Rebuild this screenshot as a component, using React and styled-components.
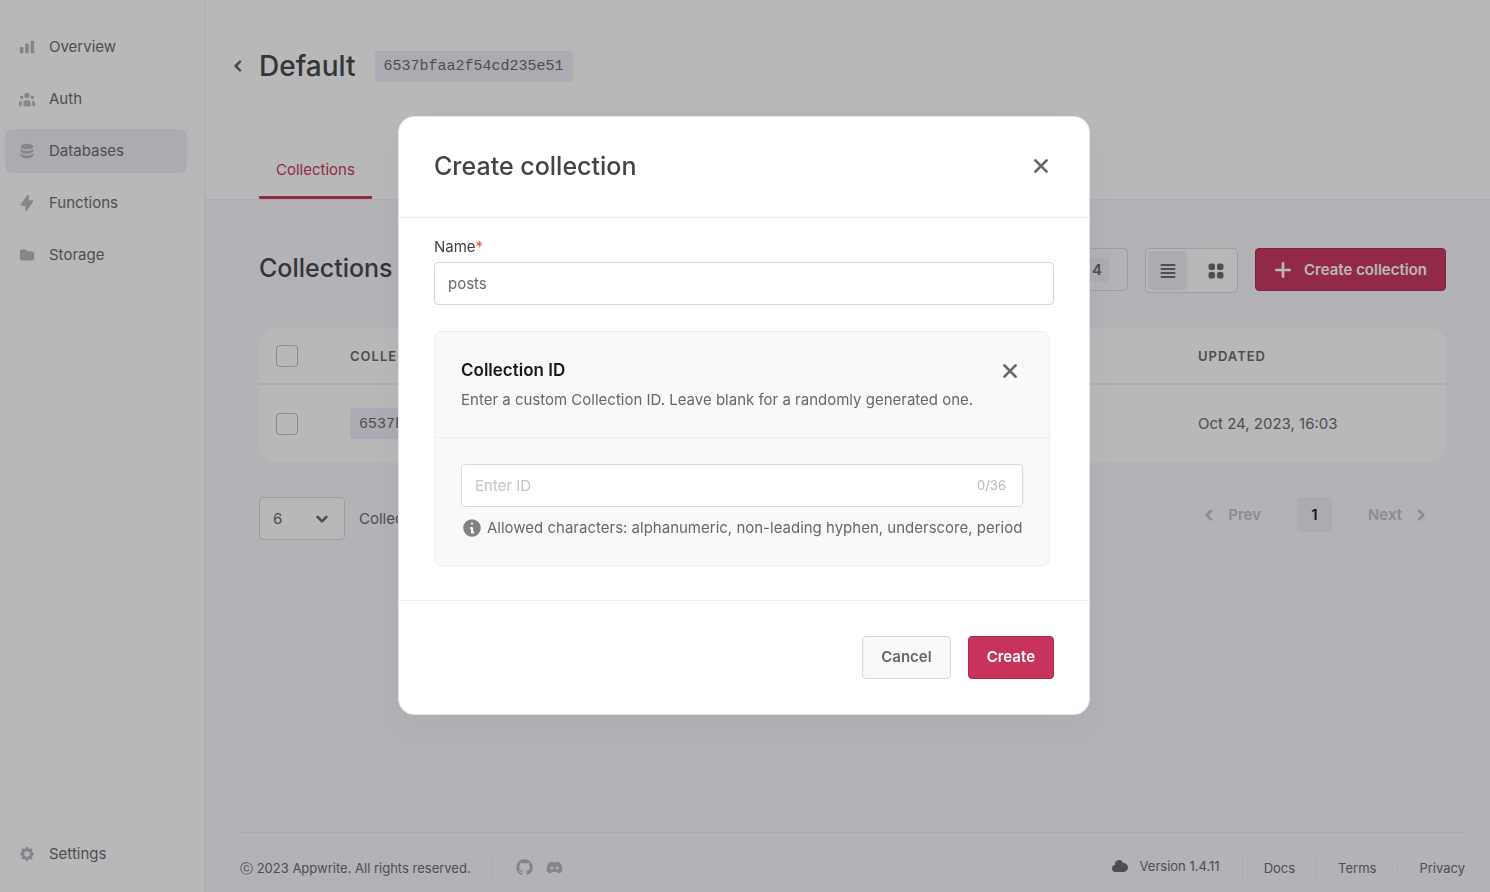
import React from "react";
import styled, { createGlobalStyle, css } from "styled-components";
import {
  HiChartBar,
  HiUserGroup,
  HiDatabase,
  HiLightningBolt,
  HiFolder,
  HiCog,
  HiCloud,
  HiInformationCircle,
} from "react-icons/hi";
import { FaGithub, FaDiscord } from "react-icons/fa";

const colors = {
  white: "#ffffff",
  canvas: "#f7f6fc",
  tint: "#eeedf5",
  line: "#edecf2",
  lineStrong: "#d8d8dc",
  text: "#68686c",
  heading: "#434348",
  icon: "#b7b6be",
  pink: "#c8335c",
  pinkDark: "#ad2950",
};

const GlobalStyle = createGlobalStyle`
  *, *::before, *::after { box-sizing: border-box; }
  body {
    margin: 0;
    font-family: Inter, "Liberation Sans", sans-serif;
    font-size: 15px;
    line-height: 24px;
    color: ${colors.text};
    background: ${colors.canvas};
  }
  button, input, select { font: inherit; color: inherit; }
  h1, h2, h3, p, ul { margin: 0; padding: 0; }
  a { color: inherit; text-decoration: none; }
`;

const Shell = styled.div`
  display: flex;
  min-height: 100vh;
`;

const Sidebar = styled.nav`
  display: flex;
  flex-direction: column;
  justify-content: space-between;
  flex: none;
  width: 205px;
  padding: 25px 17px 16px 5px;
  background: ${colors.white};
  border-right: 1px solid ${colors.line};
`;

const NavList = styled.ul`
  display: flex;
  flex-direction: column;
  gap: 8px;
  list-style: none;
`;

const NavLink = styled.a`
  display: flex;
  align-items: center;
  gap: 13px;
  height: 44px;
  padding: 0 13px;
  border-radius: 8px;
  background: ${(p) => (p.$active ? colors.tint : "transparent")};

  svg {
    width: 18px;
    height: 18px;
    color: ${colors.icon};
  }
`;

const Main = styled.div`
  display: flex;
  flex-direction: column;
  flex: 1;
  min-width: 0;
`;

const PageHeader = styled.header`
  display: flex;
  flex-direction: column;
  justify-content: space-between;
  height: 200px;
  padding: 48px 44px 0 26px;
  background: ${colors.white};
  border-bottom: 1px solid ${colors.line};
`;

const TitleRow = styled.div`
  display: flex;
  align-items: center;
`;

const IconButton = styled.button`
  display: grid;
  place-items: center;
  width: ${(p) => p.$size}px;
  height: ${(p) => p.$size}px;
  padding: 0;
  border: 0;
  background: none;
  color: #66666b;
`;

const PageTitle = styled.h1`
  margin: 0 19px 0 14px;
  font-size: 28px;
  font-weight: 500;
  line-height: 36px;
  color: ${colors.heading};
`;

const IdChip = styled.span`
  display: inline-flex;
  align-items: center;
  height: 31px;
  padding: 2px 9px 0;
  border-radius: 4px;
  background: ${colors.tint};
  font-family: "Liberation Mono", monospace;
  font-size: 15px;
`;

const Tabs = styled.div`
  display: flex;
  padding-left: 28px;
`;

const Tab = styled.a`
  height: 41px;
  padding: 0 17px;
  border-bottom: 3px solid ${colors.pink};
  border-radius: 1px;
  color: ${colors.pink};
`;

const Content = styled.main`
  flex: 1;
  padding: 48px 44px 48px 54px;
`;

const Toolbar = styled.div`
  display: flex;
  justify-content: space-between;
  align-items: flex-start;
`;

const SectionTitle = styled.h2`
  font-size: 25px;
  font-weight: 500;
  line-height: 40px;
  color: ${colors.heading};
`;

const ToolbarActions = styled.div`
  display: flex;
  align-items: flex-start;
  gap: 17px;
`;

const Button = styled.button`
  display: inline-flex;
  align-items: center;
  gap: 12px;
  height: 43px;
  padding: 0 18px;
  border: 1px solid ${colors.lineStrong};
  border-radius: 4px;
  background: #f9f9fa;
  font-weight: 600;

  ${(p) =>
    p.$primary &&
    css`
      border-color: ${colors.pinkDark};
      background: ${colors.pink};
      color: ${colors.white};
    `}
  ${(p) =>
    p.$outline &&
    css`
      background: transparent;
    `}
`;

const Count = styled.span`
  padding: 0 7px;
  border-radius: 4px;
  background: ${colors.tint};
`;

const ViewSwitch = styled.div`
  display: flex;
  gap: 9px;
  width: 93px;
  height: 45px;
  padding: 2px;
  border: 1px solid ${colors.lineStrong};
  border-radius: 5px;
  background: ${colors.white};
`;

const ViewButton = styled.button`
  display: grid;
  place-items: center;
  width: 39px;
  padding: 0;
  border: 0;
  border-radius: 4px;
  background: ${(p) => (p.$active ? colors.tint : "transparent")};
`;

const Table = styled.table`
  width: 100%;
  margin-top: 35px;
  border-collapse: separate;
  border-spacing: 0;
  table-layout: fixed;
  border-radius: 16px;
  background: ${colors.white};

  th,
  td {
    padding: 0;
    text-align: left;
  }
  th {
    height: 57px;
    border-bottom: 2px solid ${colors.line};
    font-size: 13px;
    font-weight: 600;
    letter-spacing: 1px;
    text-transform: uppercase;
  }
  td {
    height: 77px;
  }
`;

const CheckCell = styled.col`
  width: 91px;
`;

const UpdatedCell = styled.col`
  width: 248px;
`;

const Checkbox = styled.input`
  display: block;
  appearance: none;
  width: 22px;
  height: 22px;
  margin: 0 0 0 17px;
  border: 1px solid #bcbcc1;
  border-radius: 4px;
`;

const Pager = styled.div`
  display: flex;
  justify-content: space-between;
  align-items: flex-start;
  margin-top: 35px;
`;

const PageSize = styled.label`
  display: flex;
  align-items: center;
  gap: 14px;
`;

const SelectBox = styled.span`
  display: grid;
  align-items: center;
  width: 86px;

  select,
  svg {
    grid-area: 1 / 1;
  }
  svg {
    justify-self: end;
    margin-right: 17px;
    pointer-events: none;
  }
`;

const Select = styled.select`
  appearance: none;
  width: 100%;
  height: 43px;
  padding: 0 13px;
  border: 1px solid ${colors.lineStrong};
  border-radius: 4px;
  background: ${colors.white};
`;

const PageNav = styled.nav`
  display: flex;
  align-items: center;
  padding-right: 19px;
  gap: 36px;
`;

const StepButton = styled.button`
  display: flex;
  align-items: center;
  gap: 13px;
  padding: 0;
  border: 0;
  background: none;
  font-weight: 600;
  color: #c0bfc6;
`;

const CurrentPage = styled.button`
  width: 35px;
  height: 35px;
  padding: 0;
  border: 0;
  border-radius: 4px;
  background: ${colors.tint};
  font-weight: 600;
  color: #1b1b1f;
`;

const Footer = styled.footer`
  display: flex;
  justify-content: space-between;
  align-items: center;
  height: 60px;
  margin: 0 25px 0 35px;
  padding-top: 10px;
  border-top: 1px solid ${colors.line};
  font-size: 13px;
`;

const FooterGroup = styled.div`
  display: flex;
  align-items: center;
`;

const Divider = styled.span`
  width: 1px;
  height: ${(p) => (p.$tall ? 32 : 20)}px;
  margin: 0 21px;
  background: ${colors.line};
`;

const SocialLinks = styled.div`
  display: flex;
  gap: 13px;
  padding-left: 2px;

  a {
    display: flex;
    color: ${colors.icon};
  }
`;

const Version = styled.a`
  display: flex;
  align-items: center;
  gap: 10px;
  height: 28px;
  padding: 0 1px 3px 0;
`;

const Backdrop = styled.div`
  position: fixed;
  inset: 0;
  display: flex;
  justify-content: center;
  align-items: center;
  padding: 0 2px 62px 0;
  background: rgba(20, 20, 22, 0.3);
`;

const Modal = styled.form`
  width: 692px;
  max-width: 100%;
  border: 1px solid #e4e4e6;
  border-radius: 16px;
  background: ${colors.white};
  box-shadow: 0 16px 32px rgba(55, 59, 77, 0.04);
`;

const ModalHeader = styled.header`
  display: flex;
  justify-content: space-between;
  align-items: center;
  height: 101px;
  padding: 0 35px 2px;
  border-bottom: 1px solid #ededf0;
`;

const ModalTitle = styled.h2`
  font-size: 25px;
  font-weight: 500;
  line-height: 32px;
  color: ${colors.heading};
`;

const ModalBody = styled.div`
  padding: 17px 35px 34px;
`;

const Label = styled.label`
  display: block;
  margin-bottom: 3px;
  color: #414146;
`;

const Required = styled.span`
  color: #f0483e;
`;

const Field = styled.input`
  display: block;
  flex: 1;
  width: 100%;
  min-width: 0;
  height: 43px;
  padding: 0 13px;
  border: 1px solid #d8d8db;
  border-radius: 4px;
  outline: 0;
  background: ${colors.white};

  &::placeholder {
    color: #c4c4c7;
    opacity: 1;
  }
`;

const Panel = styled.section`
  margin: 26px 4px 0 0;
  border: 1px solid #ededf0;
  border-radius: 8px;
  background: #f9f9fa;
`;

const PanelHeader = styled.div`
  height: 106px;
  padding: 26px 26px 0;
  border-bottom: 1px solid #ededf0;
`;

const PanelTitleRow = styled.div`
  display: flex;
  justify-content: space-between;
  align-items: center;
  margin-bottom: 4px;
`;

const PanelTitle = styled.h3`
  font-size: 17px;
  font-weight: 600;
  line-height: 25px;
  color: #18181b;
`;

const PanelBody = styled.div`
  padding: 26px 26px 25px;
`;

const CountedField = styled.div`
  display: flex;
  align-items: center;
  border: 1px solid #d8d8db;
  border-radius: 4px;
  background: ${colors.white};

  ${Field} {
    height: 41px;
    border: 0;
  }
`;

const Counter = styled.span`
  padding-right: 16px;
  font-size: 13px;
  color: #b9b9bd;
`;

const Hint = styled.p`
  display: flex;
  align-items: center;
  gap: 4px;
  margin-top: 9px;
  white-space: nowrap;

  svg {
    flex: none;
    color: #818186;
  }
`;

const ModalFooter = styled.footer`
  display: flex;
  justify-content: flex-end;
  gap: 17px;
  padding: 35px;
  border-top: 1px solid #ededf0;
`;

const CloseIcon = () => (
  <svg width="16" height="16" viewBox="0 0 16 16" fill="none" stroke="currentColor" strokeWidth="2.7" strokeLinecap="round" aria-hidden="true">
    <path d="M2.4 2.4l11.2 11.2M13.6 2.4L2.4 13.6" />
  </svg>
);

const rotation = { left: 0, right: 180, down: 270 };

const Chevron = ({ to }) => (
  <svg width="12" height="12" viewBox="0 0 12 12" fill="none" stroke="currentColor" strokeWidth="2.6" strokeLinecap="round" strokeLinejoin="round" aria-hidden="true">
    <path d="M8 1.7L3.7 6 8 10.3" transform={`rotate(${rotation[to]} 6 6)`} />
  </svg>
);

const PlusIcon = () => (
  <svg width="18" height="18" viewBox="0 0 18 18" fill="none" stroke="currentColor" strokeWidth="2.7" strokeLinecap="round" aria-hidden="true">
    <path d="M9 2.4v13.2M2.4 9h13.2" />
  </svg>
);

const ListIcon = () => (
  <svg width="16" height="16" viewBox="0 0 16 16" fill="none" stroke="currentColor" strokeWidth="2" strokeLinecap="round" aria-hidden="true">
    <path d="M1.5 2h13M1.5 6h13M1.5 10h13M1.5 14h13" />
  </svg>
);

const GridIcon = () => (
  <svg width="16" height="16" viewBox="0 0 16 16" fill="currentColor" aria-hidden="true">
    <rect x="0.5" y="0.5" width="6.5" height="6.5" rx="2" />
    <rect x="9" y="0.5" width="6.5" height="6.5" rx="2" />
    <rect x="0.5" y="9" width="6.5" height="6.5" rx="2" />
    <rect x="9" y="9" width="6.5" height="6.5" rx="2" />
  </svg>
);

const navItems = [
  { label: "Overview", Icon: HiChartBar },
  { label: "Auth", Icon: HiUserGroup },
  { label: "Databases", Icon: HiDatabase, active: true },
  { label: "Functions", Icon: HiLightningBolt },
  { label: "Storage", Icon: HiFolder },
];

function SideNav() {
  return (
    <Sidebar aria-label="Project">
      <NavList>
        {navItems.map(({ label, Icon, active }) => (
          <li key={label}>
            <NavLink href="#" $active={active}>
              <Icon />
              {label}
            </NavLink>
          </li>
        ))}
      </NavList>
      <NavLink href="#">
        <HiCog />
        Settings
      </NavLink>
    </Sidebar>
  );
}

function CollectionsTable() {
  return (
    <Table>
      <colgroup>
        <CheckCell />
        <col />
        <UpdatedCell />
      </colgroup>
      <thead>
        <tr>
          <th>
            <Checkbox type="checkbox" aria-label="Select all" />
          </th>
          <th>Collection ID</th>
          <th>Updated</th>
        </tr>
      </thead>
      <tbody>
        <tr>
          <td>
            <Checkbox type="checkbox" aria-label="Select collection" />
          </td>
          <td>
            <IdChip>6537bfaa2f54cd235e51</IdChip>
          </td>
          <td>Oct 24, 2023, 16:03</td>
        </tr>
      </tbody>
    </Table>
  );
}

function CreateCollectionModal() {
  return (
    <Backdrop>
      <Modal role="dialog" aria-modal="true" aria-labelledby="modal-title" onSubmit={(e) => e.preventDefault()}>
        <ModalHeader>
          <ModalTitle id="modal-title">Create collection</ModalTitle>
          <IconButton type="button" $size={26} aria-label="Close">
            <CloseIcon />
          </IconButton>
        </ModalHeader>
        <ModalBody>
          <Label htmlFor="name">
            Name<Required>*</Required>
          </Label>
          <Field id="name" type="text" defaultValue="posts" />
          <Panel>
            <PanelHeader>
              <PanelTitleRow>
                <PanelTitle>
                  <label htmlFor="collection-id">Collection ID</label>
                </PanelTitle>
                <IconButton type="button" $size={26} aria-label="Remove custom ID">
                  <CloseIcon />
                </IconButton>
              </PanelTitleRow>
              <p>Enter a custom Collection ID. Leave blank for a randomly generated one.</p>
            </PanelHeader>
            <PanelBody>
              <CountedField>
                <Field id="collection-id" type="text" placeholder="Enter ID" maxLength={36} />
                <Counter>0/36</Counter>
              </CountedField>
              <Hint>
                <HiInformationCircle size={22} />
                Allowed characters: alphanumeric, non-leading hyphen, underscore, period
              </Hint>
            </PanelBody>
          </Panel>
        </ModalBody>
        <ModalFooter>
          <Button type="button">Cancel</Button>
          <Button type="submit" $primary>
            Create
          </Button>
        </ModalFooter>
      </Modal>
    </Backdrop>
  );
}

export default function App() {
  return (
    <>
      <GlobalStyle />
      <Shell>
        <SideNav />
        <Main>
          <PageHeader>
            <TitleRow>
              <IconButton type="button" $size={14} aria-label="Back">
                <Chevron to="left" />
              </IconButton>
              <PageTitle>Default</PageTitle>
              <IdChip>6537bfaa2f54cd235e51</IdChip>
            </TitleRow>
            <Tabs>
              <Tab href="#">Collections</Tab>
            </Tabs>
          </PageHeader>
          <Content>
            <Toolbar>
              <SectionTitle>Collections</SectionTitle>
              <ToolbarActions>
                <Button type="button" $outline>
                  Columns <Count>4</Count>
                </Button>
                <ViewSwitch>
                  <ViewButton type="button" $active aria-label="List view">
                    <ListIcon />
                  </ViewButton>
                  <ViewButton type="button" aria-label="Grid view">
                    <GridIcon />
                  </ViewButton>
                </ViewSwitch>
                <Button type="button" $primary>
                  <PlusIcon />
                  Create collection
                </Button>
              </ToolbarActions>
            </Toolbar>
            <CollectionsTable />
            <Pager>
              <PageSize>
                <SelectBox>
                  <Select defaultValue="6">
                    <option>6</option>
                    <option>12</option>
                  </Select>
                  <Chevron to="down" />
                </SelectBox>
                Collections per page
              </PageSize>
              <PageNav aria-label="Pages">
                <StepButton type="button">
                  <Chevron to="left" />
                  Prev
                </StepButton>
                <CurrentPage type="button">1</CurrentPage>
                <StepButton type="button">
                  Next
                  <Chevron to="right" />
                </StepButton>
              </PageNav>
            </Pager>
          </Content>
          <Footer>
            <FooterGroup>
              ⓒ 2023 Appwrite. All rights reserved.
              <Divider />
              <SocialLinks>
                <a href="#" aria-label="GitHub">
                  <FaGithub size={17} />
                </a>
                <a href="#" aria-label="Discord">
                  <FaDiscord size={17} />
                </a>
              </SocialLinks>
            </FooterGroup>
            <FooterGroup>
              <Version href="#">
                <HiCloud size={20} />
                Version 1.4.11
              </Version>
              <Divider $tall />
              <a href="#">Docs</a>
              <Divider />
              <a href="#">Terms</a>
              <Divider />
              <a href="#">Privacy</a>
            </FooterGroup>
          </Footer>
        </Main>
      </Shell>
      <CreateCollectionModal />
    </>
  );
}
